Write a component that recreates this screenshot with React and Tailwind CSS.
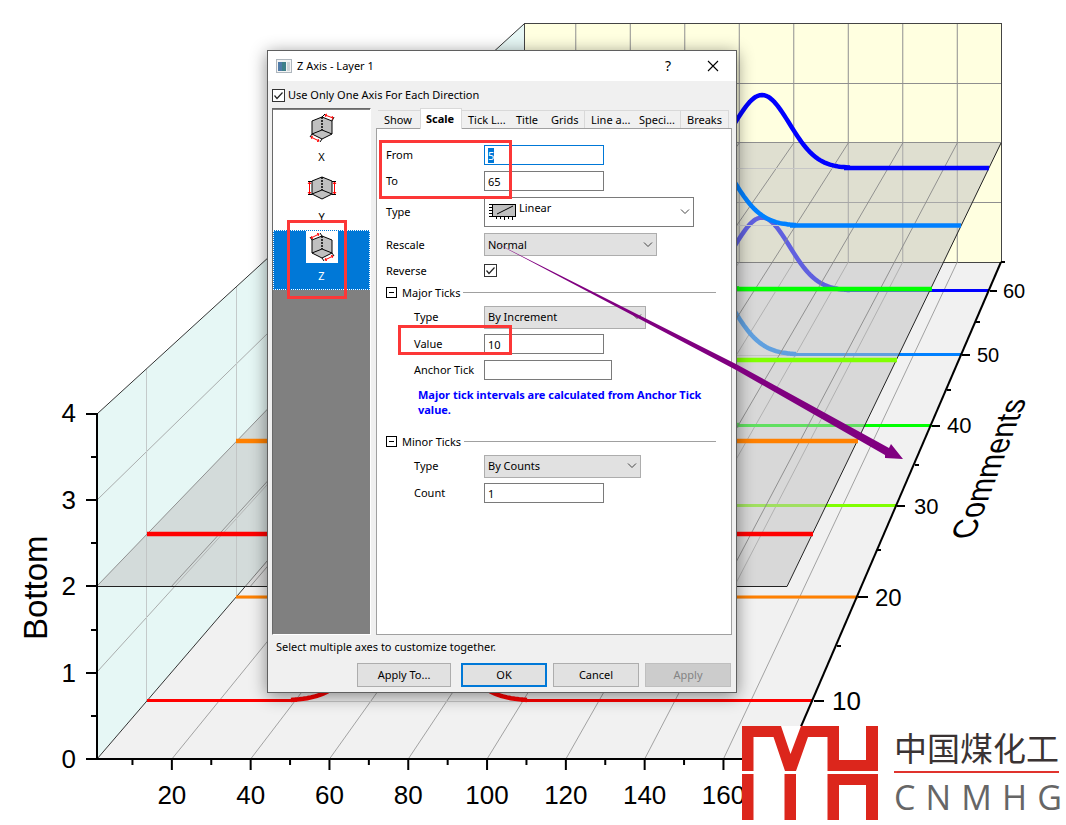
import { useEffect, useRef } from "react";

const UI_FONT = "font-['Noto_Sans','Open_Sans',sans-serif]";

const xValues = [20, 40, 60, 80, 100, 120, 140, 160];
const frontX = (v) => 97 + (v - 1) * 3.94;
const backX = (v) => 524 + (v - 1) * 2.725;

// one entry per series: floor height, plane height, left and right ends, bell
const series = [
  { color: "#0000ff", floor: 290.5, plane: 168, x1: 500, x2: 989, mean: 762, amp: 73, sigma: 27.5 },
  { color: "#0080ff", floor: 354.5, plane: 225.5, x1: 445, x2: 961, mean: 702, amp: 80, sigma: 29.5 },
  { color: "#00ff00", floor: 425.5, plane: 289, x1: 384, x2: 932, mean: 640, amp: 86, sigma: 31 },
  { color: "#80ff00", floor: 505.5, plane: 360, x1: 315, x2: 897, mean: 570, amp: 91, sigma: 33 },
  { color: "#ff8000", floor: 597, plane: 441, x1: 236, x2: 858, mean: 494, amp: 97, sigma: 35 },
  { color: "#ff0000", floor: 700.5, plane: 534, x1: 147, x2: 813, mean: 409, amp: 103, sigma: 37 },
];

const bell = (s, base, from, to) => {
  const points = [];
  for (let x = from; x <= to; x += 2) {
    const d = (x - s.mean) / s.sigma;
    points.push(`${x},${(base - s.amp * Math.exp((-d * d) / 2)).toFixed(1)}`);
  }
  return points.join(" ");
};

const Curve = ({ s, base, flat }) => {
  const left = Math.round(s.mean - s.sigma * 3.2);
  const right = Math.round(s.mean + s.sigma * 3.2);
  return (
    <g fill="none" stroke={s.color} strokeLinejoin="round">
      <path d={`M${s.x1} ${base}H${left + 6}M${right - 6} ${base}H${s.x2}`} strokeWidth={flat} />
      <polyline points={bell(s, base, left, right)} strokeWidth="4.5" />
    </g>
  );
};

const zTicks = [
  { label: "60", x: 990, y: 291, len: 7, tx: 1003, ty: 298, size: 20 },
  { label: "50", x: 962, y: 355, len: 8, tx: 977, ty: 362, size: 20 },
  { label: "40", x: 932, y: 426, len: 8, tx: 947, ty: 433, size: 22 },
  { label: "30", x: 897, y: 506, len: 8, tx: 914, ty: 514, size: 22 },
  { label: "20", x: 858, y: 597, len: 10, tx: 875, ty: 606, size: 24 },
  { label: "10", x: 814, y: 701, len: 10, tx: 832, ty: 710, size: 26 },
];

const zMinor = [
  [1001, 262],
  [976, 322],
  [947, 390],
  [915, 465],
  [877, 550],
  [837, 646],
];

const Chart = () => (
  <svg
    viewBox="0 0 1066 825"
    className="block w-full h-auto font-['Liberation_Sans',Arial,sans-serif]"
    role="img"
    aria-label="3D waterfall chart"
  >
    <polygon points="97,759 524,262 1001,262 787,759" fill="#f1f1f1" />
    <polygon points="97,414 524,24 524,262 97,759" fill="#e6f7f5" />
    <rect x="524" y="24" width="477" height="238" fill="#ffffe0" />

    {/* back wall grid */}
    <g stroke="#8f8f8f" strokeWidth="1">
      {xValues.map((v) => (
        <path key={v} d={`M${backX(v)} 24V262`} />
      ))}
      <path d="M524 83.5H1001M524 142.5H1001M524 202.5H1001" />
    </g>
    <rect x="524.5" y="23.5" width="477" height="239" fill="none" stroke="#444" />

    {/* left wall grid */}
    <g stroke="#999" fill="none">
      <path d="M97 500L524 83M97 672L524 202" strokeWidth="0.8" />
      <path d="M146.500 369V701M236.500 287V597" stroke="#c4caca" />
      <path d="M97 414L524 24M97 759L524 262" stroke="#333" />
    </g>

    {/* floor grid */}
    <g stroke="#999" strokeWidth="0.9">
      {xValues.map((v) => (
        <path key={v} d={`M${frontX(v)} 759L${backX(v)} 262`} />
      ))}
    </g>
    <g stroke="#c8c8c8">
      {series.map((s) => (
        <path key={s.color} d={`M${s.x1} ${s.floor + 1}H${s.x2}`} />
      ))}
    </g>
    {series.map((s) => (
      <Curve key={s.color} s={s} base={s.floor} flat="3" />
    ))}

    {/* half transparent plane at 2 */}
    <polygon points="97,586 524,143 1001,143 787,586" fill="#c0c0c0" fillOpacity="0.5" />
    <g stroke="#888" strokeWidth="0.9">
      {xValues.map((v) => (
        <path key={v} d={`M${frontX(v)} 586L${backX(v)} 143`} />
      ))}
      <path d="M97 586L524 143" />
    </g>
    <path d="M97 586.5H787L1001 143" fill="none" stroke="#222" />
    <path d="M640 168.500H989M640 225.500H961" stroke="#c6c6c6" />
    {series.map((s) => (
      <Curve key={s.color} s={s} base={s.plane} flat="4.5" />
    ))}

    {/* axes */}
    <g stroke="#000" strokeWidth="2" fill="none">
      <path d="M97 413V759H787" />
      <path d="M787 759L1001 262" />
      <path d="M86 414H97M86 500H97M86 586H97M86 673H97M86 759H97" />
      <path d="M91 457H97M91 543H97M91 630H97M91 716H97" />
      {xValues.map((v) => (
        <path key={v} d={`M${frontX(v)} 759v11M${frontX(v - 10)} 759v6`} />
      ))}
      {zTicks.map((t) => (
        <path key={t.label} d={`M${t.x} ${t.y}h${t.len}`} />
      ))}
      {zMinor.map(([x, y]) => (
        <path key={x} d={`M${x} ${y}h4`} />
      ))}
    </g>

    <g fontSize="26" textAnchor="end">
      <text x="76" y="422">4</text>
      <text x="76" y="509">3</text>
      <text x="76" y="595">2</text>
      <text x="76" y="682">1</text>
      <text x="76" y="768">0</text>
    </g>
    <g fontSize="26" textAnchor="middle">
      {xValues.map((v) => (
        <text key={v} x={frontX(v)} y="804">
          {v}
        </text>
      ))}
    </g>
    {zTicks.map((t) => (
      <text key={t.label} x={t.tx} y={t.ty} fontSize={t.size}>
        {t.label}
      </text>
    ))}
    <text transform="translate(47 640) rotate(-90)" fontSize="33">
      Bottom
    </text>
    <text transform="translate(973 539) rotate(-69) skewX(21)" fontSize="31">
      Comments
    </text>
  </svg>
);

const arrows = {
  X: {
    ticks: "M16 5l3-3M26 9l2-4M6 22l-2 3M16 27l-2 3",
    red: "M19 3L27 6M5 25L13 29",
    heads: "M21 2L19 3L20 5M26 7.500L27 6L26 4M7 24L5 25L6 27M11 29.500L13 29L12 27",
  },
  Y: {
    ticks: "M2 9.500H6M2 22.500H6M26 9.500H30M26 22.500H30",
    red: "M3.500 10V22M28.500 10V22",
    heads: "M2 12l1.500-2l1.500 2M2 20l1.500 2l1.500-2M27 12l1.500-2l1.500 2M27 20l1.500 2l1.500-2",
  },
  Z: {
    ticks: "M6 9l-2-3M16 5l-2-3M26 22l2 3M16 27l2 3",
    red: "M5 7L13 3M19 29L27 25",
    heads: "M6 5L5 7L7 7.500M11 2.500L13 3L12 5M20 27L19 29L21 29.500M25 24.500L27 25L26 27",
  },
};

const AxisIcon = ({ axis }) => (
  <svg viewBox="0 0 32 32" className="size-8 bg-white" fill="none" strokeWidth="1">
    <path d="M16 5L26 9V22L16 27L6 22V9Z" fill="#c0c0c0" stroke="#000" />
    <path d="M16 18L6 22M16 18L26 22" stroke="#000" />
    <path d="M16 5V18" stroke="#000" strokeWidth="1.500" strokeDasharray="2 1" />
    <path d={arrows[axis].ticks} stroke="#000" />
    <path d={arrows[axis].red} stroke="#f00" />
    <path d={arrows[axis].heads} stroke="#f00" />
  </svg>
);

const Chevron = () => (
  <svg
    viewBox="0 0 10 6"
    className="absolute right-1 top-1/2 -mt-[3px] w-[10px] h-[6px] pointer-events-none"
    fill="none"
    stroke="#444"
  >
    <path d="M1 0.500L5 4.500L9 0.500" />
  </svg>
);

const Row = ({ id, label, indent, height, children }) => (
  <div className={`flex items-center ${height}`}>
    <label htmlFor={id} className={indent ? "w-[98px] pl-7 whitespace-nowrap" : "w-[98px]"}>
      {label}
    </label>
    {children}
  </div>
);

const TextBox = ({ id, width, value }) => (
  <input
    id={id}
    type="text"
    defaultValue={value}
    className={`h-5 border border-[#7a7a7a] bg-white px-[3px] outline-none ${width}`}
  />
);

const Select = ({ id, width, value }) => (
  <div className={`relative ${width}`}>
    <select
      id={id}
      className="appearance-none block w-full h-[23px] border border-[#adadad] bg-[#e1e1e1] pl-[3px] outline-none"
    >
      <option>{value}</option>
    </select>
    <Chevron />
  </div>
);

const Section = ({ title }) => (
  <div className="flex items-center h-[21px]">
    <button type="button" aria-label={`Collapse ${title}`} className="flex items-center justify-center size-[11px] border border-black">
      <span className="w-[5px] h-px bg-black" />
    </button>
    <span className="ml-[5px] mr-[3px]">{title}</span>
    <span className="flex-1 h-px bg-[#a0a0a0]" />
  </div>
);

const CheckBox = ({ id }) => (
  <span className="relative size-[13px]">
    <input id={id} type="checkbox" defaultChecked className="appearance-none block size-[13px] border border-[#333] bg-white" />
    <svg viewBox="0 0 13 13" className="absolute inset-0 size-[13px] pointer-events-none" fill="none" stroke="#222">
      <path d="M2.500 6.500L5 9.500L10.500 3.500" strokeWidth="1.200" />
    </svg>
  </span>
);

const tabs = [
  { name: "Show", width: "w-[42px]" },
  { name: "Scale", width: "w-[42px]", active: true },
  { name: "Tick L...", width: "w-[48px]" },
  { name: "Title", width: "w-[35px]" },
  { name: "Grids", width: "w-[40px]", edge: true },
  { name: "Line a...", width: "w-[48px]" },
  { name: "Speci...", width: "w-[48px]", edge: true },
  { name: "Breaks", width: "w-[48px]", edge: true },
];

const Tabs = () => (
  <div role="tablist" className="flex items-end h-5 pl-0.5">
    {tabs.map((tab) => (
      <button
        key={tab.name}
        type="button"
        role="tab"
        aria-selected={!!tab.active}
        className={`text-left whitespace-nowrap border-t border-[#d9d9d9] ${tab.width} ${
          tab.active ? "relative h-[21px] -mb-px pl-[5px] bg-white border-x font-bold" : "h-[18px] pl-[6px]"
        } ${tab.edge ? "border-r" : ""}`}
      >
        {tab.name}
      </button>
    ))}
  </div>
);

const AxisList = () => (
  <div className="w-[99px] pt-px border border-[#696969] border-r-white border-b-white bg-[#808080]">
    {["X", "Y", "Z"].map((axis) => (
      <button
        key={axis}
        type="button"
        className={`flex flex-col items-center w-full h-[60px] border ${
          axis === "Z" ? "bg-[#0078d7] text-white border-dotted border-white" : "bg-white border-white pt-px"
        }`}
      >
        <AxisIcon axis={axis} />
        <span className="mt-[5px] leading-4">{axis}</span>
      </button>
    ))}
  </div>
);

const ScalePanel = () => {
  const from = useRef(null);

  useEffect(() => {
    from.current.focus();
    from.current.select();
  }, []);

  return (
    <div className="flex-1 border border-[#a0a0a0] bg-white pl-[9px] pr-[15px] pt-[13px]">
      <Row id="from" label="From" height="h-[26px]">
        <input
          id="from"
          ref={from}
          type="text"
          defaultValue="5"
          className="w-[120px] h-5 border border-[#0078d7] bg-white px-[3px] outline-none selection:bg-[#0078d7] selection:text-white"
        />
      </Row>
      <Row id="to" label="To" height="h-[26px]">
        <TextBox id="to" width="w-[120px]" value="65" />
      </Row>
      <Row id="type" label="Type" height="h-9">
        <div className="relative w-[210px]">
          <svg viewBox="0 0 28 18" className="absolute left-1 top-[6px] w-7 h-[18px] pointer-events-none" fill="none" stroke="#000">
            <rect x="4.500" y="1.500" width="23" height="12" fill="#c0c0c0" />
            <path d="M9 11L25 3" />
            <path d="M1 1.500H4M1 4.500H4M1 7.500H4M1 10.500H4M1 13.500H4" />
            <path d="M8.500 14V16M12.500 14V16M16.500 14V17M20.500 14V16M24.500 14V17" />
          </svg>
          <select id="type" className="appearance-none block w-full h-[30px] border border-[#7a7a7a] bg-white pl-[34px] pb-2 outline-none">
            <option>Linear</option>
          </select>
          <Chevron />
        </div>
      </Row>
      <Row id="rescale" label="Rescale" height="h-[29px]">
        <Select id="rescale" width="w-[173px]" value="Normal" />
      </Row>
      <Row id="reverse" label="Reverse" height="h-[23px]">
        <CheckBox id="reverse" />
      </Row>
      <Section title="Major Ticks" />
      <Row id="major-type" label="Type" indent height="h-7">
        <Select id="major-type" width="w-[162px]" value="By Increment" />
      </Row>
      <Row id="value" label="Value" indent height="h-[26px]">
        <TextBox id="value" width="w-[120px]" value="10" />
      </Row>
      <Row id="anchor" label="Anchor Tick" indent height="h-[26px]">
        <TextBox id="anchor" width="w-[128px]" value="" />
      </Row>
      <p className="ml-8 mt-1 mb-[14px] leading-[15px] font-bold text-[#0000ff]">
        Major tick intervals are calculated from Anchor Tick value.
      </p>
      <Section title="Minor Ticks" />
      <Row id="minor-type" label="Type" indent height="h-7">
        <Select id="minor-type" width="w-[157px]" value="By Counts" />
      </Row>
      <Row id="count" label="Count" indent height="h-[26px]">
        <TextBox id="count" width="w-[120px]" value="1" />
      </Row>
    </div>
  );
};

// callout frames and the arrow from Rescale to the axis
const Annotations = () => (
  <svg viewBox="267 50 470 643" className="absolute -left-px -top-px w-[470px] h-[643px] overflow-visible pointer-events-none">
    <g fill="none" stroke="#fc3737" strokeWidth="3">
      <rect x="380.500" y="141.500" width="130" height="56" />
      <rect x="399.500" y="326.500" width="111" height="27" />
      <rect x="288.500" y="221.500" width="57" height="76" />
    </g>
    <polygon points="494,242 736,364 889,448 891,444 903,459 885,458 885,455 736,370" fill="#800080" />
  </svg>
);

const button = "h-6 border border-[#adadad] bg-[#e1e1e1] w-[86px]";

const AxisDialog = () => (
  <div
    role="dialog"
    aria-label="Z Axis - Layer 1"
    className={`absolute left-[267px] top-[50px] w-[470px] border border-[#5f5f5f] bg-[#f0f0f0] text-black text-[11px] leading-4 shadow-[0_3px_16px_rgba(0,0,0,0.45)] ${UI_FONT}`}
  >
    <div className="flex items-center h-[30px] bg-white pl-2 pr-[17px]">
      <svg viewBox="0 0 16 14" className="w-4 h-[14px]">
        <rect x="0.500" y="0.500" width="15" height="13" fill="#f4f4f4" stroke="#aeb6bd" />
        <rect x="2" y="3" width="8" height="9" fill="#3f8089" />
        <rect x="2" y="3" width="4" height="9" fill="#4f7ba8" />
        <rect x="11" y="3" width="3" height="9" fill="#cfd4d8" />
      </svg>
      <span className="ml-[5px] flex-1">Z Axis - Layer 1</span>
      <button type="button" className="w-5 text-[14px]">?</button>
      <button type="button" aria-label="Close" className="ml-[29px]">
        <svg viewBox="0 0 12 12" className="size-3" fill="none" stroke="#000">
          <path d="M1 1L11 11M11 1L1 11" strokeWidth="1.100" />
        </svg>
      </button>
    </div>

    <div className="flex items-center h-7 pl-1 gap-[3px]">
      <CheckBox id="one-axis" />
      <label htmlFor="one-axis">Use Only One Axis For Each Direction</label>
    </div>

    <div className="flex h-[527px] pl-1 pr-1 gap-[5px] -mt-px">
      <AxisList />
      <div className="flex flex-col flex-1">
        <Tabs />
        <ScalePanel />
      </div>
    </div>

    <p className="h-7 pt-1 pl-2">Select multiple axes to customize together.</p>
    <div className="flex justify-end pr-[5px] pb-[5px] gap-[6px]">
      <button type="button" className="h-6 w-[94px] mr-1 border border-[#adadad] bg-[#e1e1e1]">
        Apply To...
      </button>
      <button type="button" className="h-6 w-[86px] border-2 border-[#0078d7] bg-[#e1e1e1]">
        OK
      </button>
      <button type="button" className={button}>
        Cancel
      </button>
      <button type="button" disabled className="h-6 w-[86px] border border-[#bfbfbf] bg-[#cccccc] text-[#838383]">
        Apply
      </button>
    </div>
    <Annotations />
  </div>
);

const Logo = () => (
  <div className="absolute left-[742px] top-[726px] flex gap-4">
    <svg viewBox="0 0 136 94" className="w-[136px] h-[94px] bg-white" fill="#dc261c">
      <path d="M0 0H39L48.500 28L59 0H97V34H124V0H136V45H85.500V11H66L54 45H43L31.500 11H11.500V45H0Z" />
      <path d="M0 48H11.500V94H0ZM42.500 48H54V94H42.500ZM85.500 48H136V94H124V59H97V94H85.500Z" />
    </svg>
    <div className="w-[168px]">
      <div className="h-[45px] pt-1 text-[33px] leading-[34px] text-[#3a3333] whitespace-nowrap font-['Noto_Sans_CJK_SC',sans-serif]">
        中国煤化工
      </div>
      <div className="h-[2px] w-[165px] bg-[#e0332d]" />
      <div className="flex justify-between pt-[7px] text-[34px] leading-[34px] text-[#666] font-['Open_Sans',sans-serif]">
        {["C", "N", "M", "H", "G"].map((letter) => (
          <span key={letter}>{letter}</span>
        ))}
      </div>
    </div>
  </div>
);

const App = () => (
  <main className="relative min-h-screen overflow-hidden bg-white">
    <Chart />
    <AxisDialog />
    <Logo />
  </main>
);

export default App;
